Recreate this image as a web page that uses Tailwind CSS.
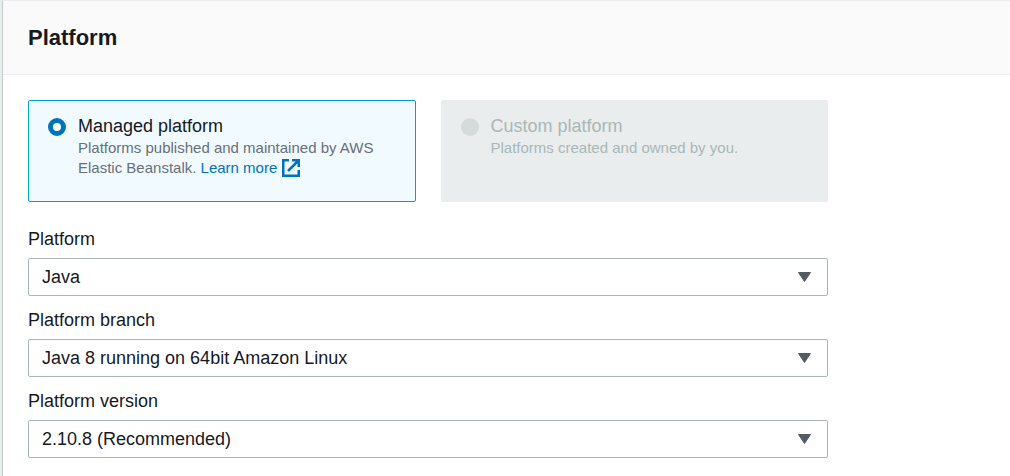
<!DOCTYPE html>
<html lang="en">
<head>
<meta charset="utf-8">
<meta name="viewport" content="width=device-width, initial-scale=1">
<title>Platform</title>
<script src="https://cdn.jsdelivr.net/npm/@tailwindcss/browser@4"></script>
</head>
<body class="min-h-screen bg-[#eaeded] pl-[2px] font-['Liberation_Sans',Arial,sans-serif] text-[#16191f]">
<main class="min-h-screen border-t border-l border-t-[#eaeded] border-l-[#c3cbcb] bg-white">
  <header class="border-b border-[#eaeded] bg-[#fafafa] px-[25px] py-[22px]">
    <h1 class="text-[22px] leading-[29px] font-bold">Platform</h1>
  </header>
  <form class="max-w-[850px] px-[25px] pt-[25px] pb-[17px]">
    <fieldset aria-label="Platform type" class="grid grid-cols-2 gap-[25px]">
      <div class="flex min-h-[102px] gap-3 rounded-xs border border-[#00a1c9] bg-[#f1faff] px-[19px] py-[14px]">
        <input id="managed" name="type" type="radio" checked class="mt-[3px] size-[18px] shrink-0 appearance-none rounded-full border-[5px] border-[#0073bb] bg-white">
        <div>
          <label for="managed" class="block text-[18px] leading-[22px]">Managed platform</label>
          <p class="mt-px text-[15px] leading-5 text-[#687078]">Platforms published and maintained by AWS Elastic Beanstalk. <a href="#" class="whitespace-nowrap text-[#0073bb]">Learn more <svg class="ml-px inline-block size-[18px] align-[-4px]" viewBox="0 0 18 18" fill="none" stroke="currentColor" stroke-width="2.5" aria-hidden="true"><path d="M7 1.25H1.25v15.5h15.5V11M10 1.25h6.75V8M16.75 1.25L6 12"/></svg></a></p>
        </div>
      </div>
      <div class="flex min-h-[102px] gap-3 rounded-xs border border-[#e9eded] bg-[#e9eded] px-[19px] py-[14px] text-[#aab7b8]">
        <input id="custom" name="type" type="radio" disabled class="mt-[3px] size-[18px] shrink-0 appearance-none rounded-full bg-[#d5dbdb]">
        <div>
          <label for="custom" class="block text-[18px] leading-[22px]">Custom platform</label>
          <p class="mt-px text-[15px] leading-5">Platforms created and owned by you.</p>
        </div>
      </div>
    </fieldset>
    <div class="mt-[26px] flex flex-col gap-[13px] text-[18px]">
      <div>
        <label for="platform" class="mb-[7px] block leading-[23px]">Platform</label>
        <div class="relative">
          <select id="platform" class="block h-[38px] w-full appearance-none rounded-xs border border-[#aab7b8] bg-white pr-12 pl-[13px]"><option>Java</option></select>
          <svg class="pointer-events-none absolute top-[14px] right-[17px] h-[10px] w-[13px]" viewBox="0 0 13 10" fill="#545b64" stroke="#545b64" stroke-linejoin="round" aria-hidden="true"><path d="M.5.5h12l-6 9z"/></svg>
        </div>
      </div>
      <div>
        <label for="branch" class="mb-[7px] block leading-[23px]">Platform branch</label>
        <div class="relative">
          <select id="branch" class="block h-[38px] w-full appearance-none rounded-xs border border-[#aab7b8] bg-white pr-12 pl-[13px]"><option>Java 8 running on 64bit Amazon Linux</option></select>
          <svg class="pointer-events-none absolute top-[14px] right-[17px] h-[10px] w-[13px]" viewBox="0 0 13 10" fill="#545b64" stroke="#545b64" stroke-linejoin="round" aria-hidden="true"><path d="M.5.5h12l-6 9z"/></svg>
        </div>
      </div>
      <div>
        <label for="version" class="mb-[7px] block leading-[23px]">Platform version</label>
        <div class="relative">
          <select id="version" class="block h-[38px] w-full appearance-none rounded-xs border border-[#aab7b8] bg-white pr-12 pl-[13px]"><option>2.10.8 (Recommended)</option></select>
          <svg class="pointer-events-none absolute top-[14px] right-[17px] h-[10px] w-[13px]" viewBox="0 0 13 10" fill="#545b64" stroke="#545b64" stroke-linejoin="round" aria-hidden="true"><path d="M.5.5h12l-6 9z"/></svg>
        </div>
      </div>
    </div>
  </form>
</main>
</body>
</html>
